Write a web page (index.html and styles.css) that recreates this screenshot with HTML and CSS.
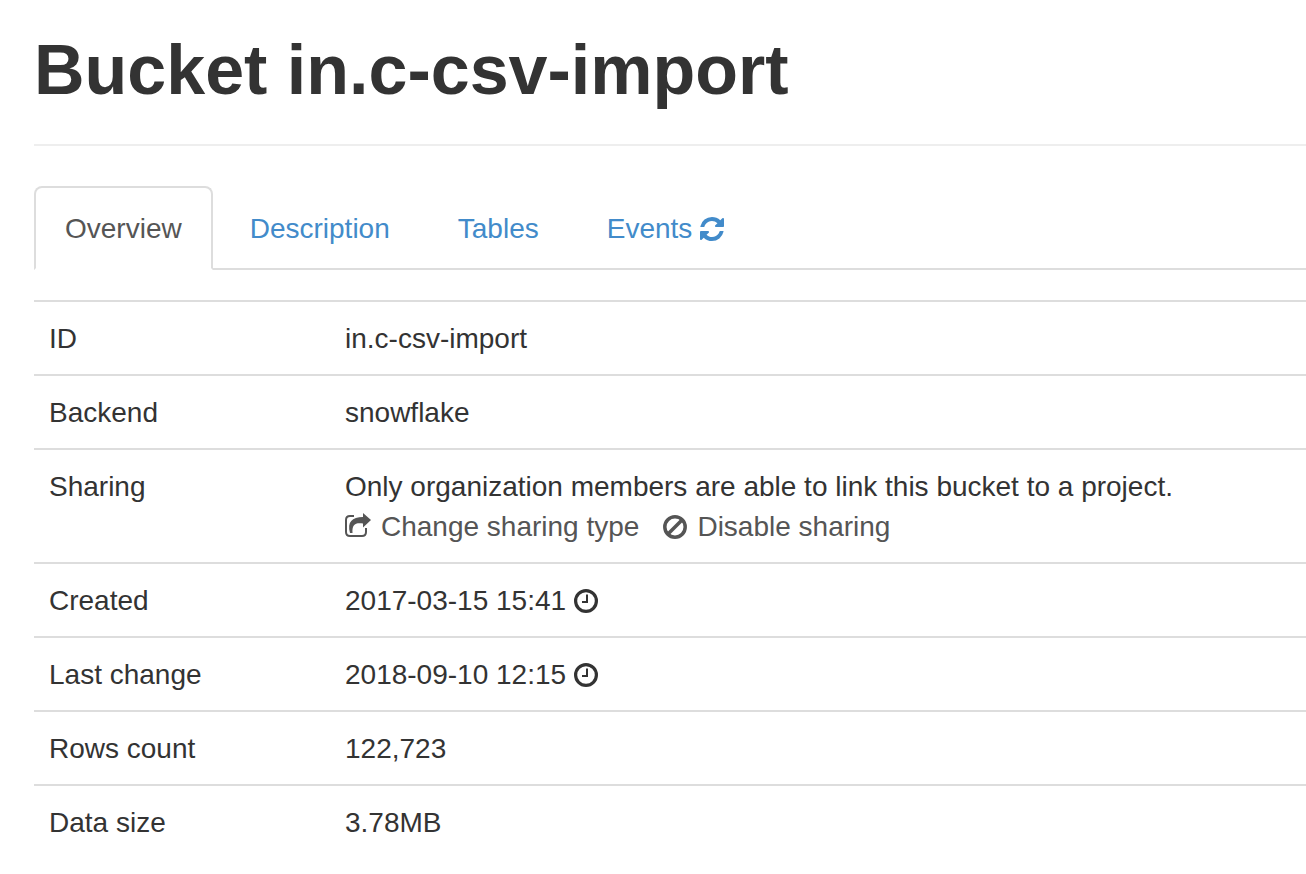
FILE: index.html
```html
<!DOCTYPE html>
<html lang="en">
<head>
<meta charset="utf-8">
<title>Bucket in.c-csv-import</title>
<link rel="stylesheet" href="styles.css">
</head>
<body>
<main class="page">
  <header class="page-header"><h1 class="title">Bucket in.c-csv-import</h1></header>
  <nav class="tabs">
    <a class="tab tab-active" href="#overview">Overview</a>
    <a class="tab" href="#description">Description</a>
    <a class="tab" href="#tables">Tables</a>
    <a class="tab" href="#events">Events <svg class="icon" viewBox="0 0 1536 1536" aria-hidden="true"><path d="M1511 928q0 5-1 7-64 268-268 434.500T764 1536q-146 0-282.500-55T238 1324l-129 129q-19 19-45 19t-45-19-19-45V960q0-26 19-45t45-19h448q26 0 45 19t19 45-19 45l-137 137q71 66 161 102t187 36q134 0 250-65t186-179q11-17 53-117 8-23 30-23h192q13 0 22.500 9.500t9.500 22.500zM1536 128v448q0 26-19 45t-45 19h-448q-26 0-45-19t-19-45 19-45l138-138Q969 256 768 256q-134 0-250 65T332 500q-11 17-53 117-8 23-30 23H50q-13 0-22.500-9.500T18 608v-7q65-268 270-434.500T768 0q146 0 284 55.500T1297 212l130-129q19-19 45-19t45 19 19 45z"/></svg></a>
  </nav>
  <table class="details">
    <tbody>
      <tr><th scope="row">ID</th><td>in.c-csv-import</td></tr>
      <tr><th scope="row">Backend</th><td>snowflake</td></tr>
      <tr><th scope="row">Sharing</th><td>Only organization members are able to link this bucket to a project.
        <div class="actions">
          <button class="action" type="button"><svg class="icon icon-share" viewBox="0 2 26 24" aria-hidden="true"><path d="M9 3H5Q1 3 1 7v12Q1 23 5 23h12q4 0 4-4v-4" fill="none" stroke="currentColor" stroke-width="2"/><path d="M18 0l8 7-8 7.500V10.500c-8-1-11 1-10.500 9.500H5C2 9 7 4 18 4z"/></svg>Change sharing type</button>
          <button class="action" type="button"><svg class="icon" viewBox="0 0 24 24" aria-hidden="true"><g fill="none" stroke="currentColor" stroke-width="3.500"><circle cx="12" cy="12" r="10.200"/><path d="M5 19l14-14"/></g></svg>Disable sharing</button>
        </div></td></tr>
      <tr><th scope="row">Created</th><td>2017-03-15 15:41 <svg class="icon" viewBox="0 0 24 24" aria-hidden="true"><g fill="none" stroke="currentColor"><circle cx="12" cy="12" r="10.400" stroke-width="3.200"/><path d="M13 5.500V13H8" stroke-width="2"/></g></svg></td></tr>
      <tr><th scope="row">Last change</th><td>2018-09-10 12:15 <svg class="icon" viewBox="0 0 24 24" aria-hidden="true"><g fill="none" stroke="currentColor"><circle cx="12" cy="12" r="10.400" stroke-width="3.200"/><path d="M13 5.500V13H8" stroke-width="2"/></g></svg></td></tr>
      <tr><th scope="row">Rows count</th><td>122,723</td></tr>
      <tr><th scope="row">Data size</th><td>3.78MB</td></tr>
    </tbody>
  </table>
</main>
</body>
</html>
```
FILE: styles.css
```css
* { box-sizing: border-box; }
body { margin: 0; background: #fff; color: #333; font: 28px/40px "Liberation Sans", Arial, sans-serif; }
.page { padding: 30px 0 0 34px; }
.page-header { padding-bottom: 34px; border-bottom: 2px solid #eee; }
.title { margin: 0; font-size: 70px; line-height: 80px; font-weight: bold; }
.tabs { display: flex; gap: 6px; margin-top: 40px; border-bottom: 2px solid #ddd; }
.tab { margin-bottom: -2px; padding: 21px 29px 19px; border: 2px solid transparent; border-radius: 8px 8px 0 0; color: #428bca; text-decoration: none; }
.tab-active { color: #555; background: #fff; border-color: #ddd #ddd #fff; }
.icon { width: 24px; height: 24px; fill: currentColor; vertical-align: -3px; }
.icon-share { width: 26px; overflow: visible; }
.details { width: 100%; margin-top: 30px; border-collapse: collapse; }
.details th, .details td { padding: 17px 15px 15px; border-top: 2px solid #ddd; text-align: left; vertical-align: top; font-weight: normal; }
.details th { width: 296px; }
.actions { display: flex; gap: 24px; }
.action { display: flex; align-items: center; gap: 10px; padding: 0; border: 0; background: none; color: #555; font: inherit; cursor: pointer; }
```
